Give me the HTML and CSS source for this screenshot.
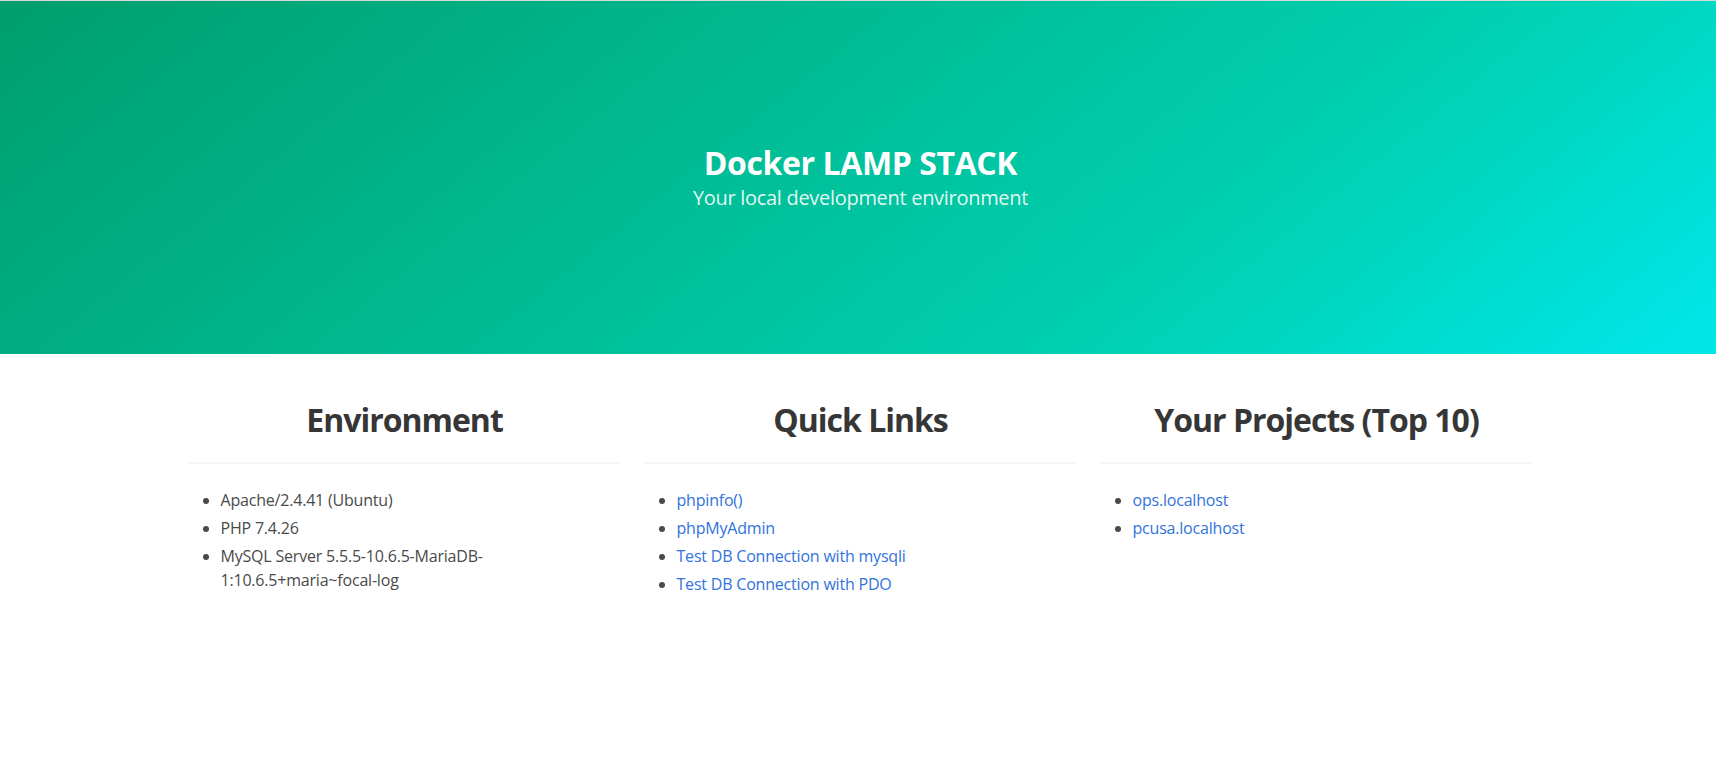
FILE: index.html
```html
<!DOCTYPE html>
<html lang="en">
<head>
<meta charset="utf-8">
<title>Docker LAMP STACK</title>
<link rel="stylesheet" href="styles.css">
</head>
<body>
<section class="hero">
  <div class="hero-body">
    <h1 class="hero-title">Docker LAMP STACK</h1>
    <h2 class="hero-subtitle">Your local development environment</h2>
  </div>
</section>
<section class="section">
  <div class="container">
    <div class="columns">
      <div class="column">
        <h3 class="col-title">Environment</h3>
        <hr class="divider">
        <ul class="list">
          <li>Apache/2.4.41 (Ubuntu)</li>
          <li>PHP 7.4.26</li>
          <li>MySQL Server 5.5.5-10.6.5-MariaDB-1:10.6.5+maria~focal-log</li>
        </ul>
      </div>
      <div class="column">
        <h3 class="col-title">Quick Links</h3>
        <hr class="divider">
        <ul class="list">
          <li><a href="#">phpinfo()</a></li>
          <li><a href="#">phpMyAdmin</a></li>
          <li><a href="#">Test DB Connection with mysqli</a></li>
          <li><a href="#">Test DB Connection with PDO</a></li>
        </ul>
      </div>
      <div class="column">
        <h3 class="col-title">Your Projects (Top 10)</h3>
        <hr class="divider">
        <ul class="list">
          <li><a href="#">ops.localhost</a></li>
          <li><a href="#">pcusa.localhost</a></li>
        </ul>
      </div>
    </div>
  </div>
</section>
</body>
</html>
```
FILE: styles.css
```css
html, body {
  margin: 0;
  padding: 0;
  background: #fff;
}
body {
  font-family: "Open Sans", "Noto Sans", sans-serif;
  font-size: 16px;
  line-height: 1.5;
  color: #4a4a4a;
  border-top: 1px solid #d9d9d9;
  padding-left: 5px;
}
.hero {
  margin-left: -5px;
  background-image: linear-gradient(141deg, #009e6c 0%, #00d1b2 71%, #00e7eb 100%);
  text-align: center;
}
.hero-body {
  padding: 144px 24px 144px 29px;
}
.hero-title {
  margin: 0 0 24px;
  font-size: 32px;
  line-height: 1.125;
  font-weight: 700;
  letter-spacing: -0.4px;
  color: #fff;
}
.hero-subtitle {
  margin: -20px 0 0;
  font-size: 20px;
  line-height: 1.25;
  font-weight: 400;
  letter-spacing: -0.3px;
  color: rgba(255, 255, 255, 0.9);
}
.section {
  padding: 48px 24px;
}
.container {
  max-width: 1344px;
  margin: 0 auto;
}
.columns {
  display: grid;
  grid-template-columns: repeat(3, 1fr);
  column-gap: 24px;
}
.col-title {
  margin: 0;
  text-align: center;
  font-size: 32px;
  line-height: 1.125;
  font-weight: 700;
  letter-spacing: -1px;
  color: #363636;
}
.divider {
  margin: 24px 0;
  height: 2px;
  border: 0;
  background: #f5f5f5;
}
.list {
  margin: 0 0 0 32px;
  padding: 0;
  list-style: disc outside;
  letter-spacing: -0.2px;
}
.list li + li {
  margin-top: 4px;
}
.list a {
  color: #3273dc;
  text-decoration: none;
}
```
